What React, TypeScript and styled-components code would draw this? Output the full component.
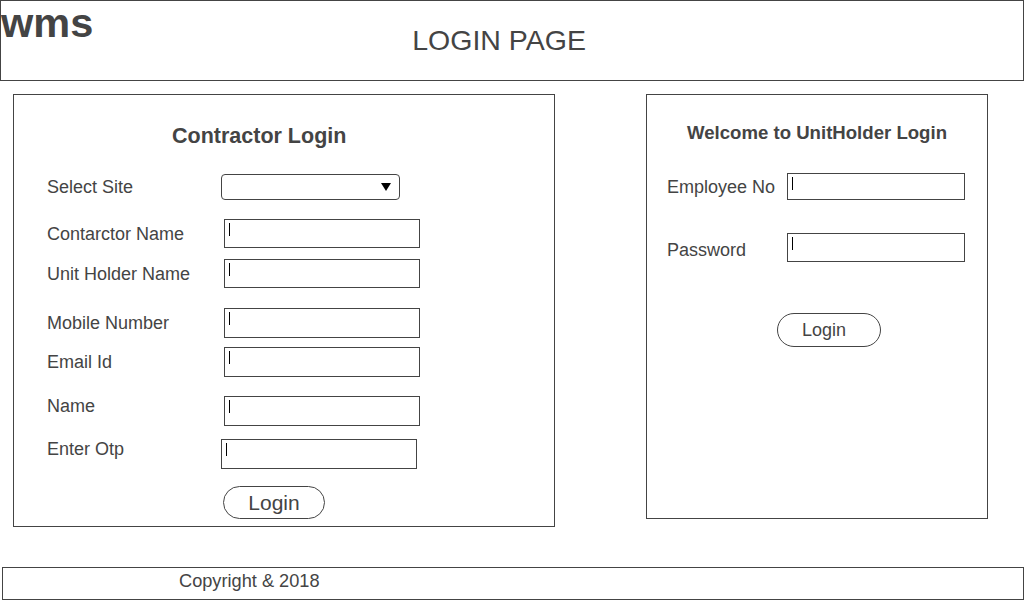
import React from "react";
import styled, { createGlobalStyle } from "styled-components";

const GlobalStyle = createGlobalStyle`
  *, *::before, *::after { box-sizing: border-box; }
  html, body { margin: 0; padding: 0; background: #ffffff; }
  body {
    width: 1024px;
    height: 600px;
    overflow: hidden;
    font-family: "Liberation Sans", Arial, Helvetica, sans-serif;
    color: #444444;
  }
`;

const Page = styled.div`
  width: 1024px;
  height: 600px;
  display: flex;
  flex-direction: column;
`;

const Header = styled.header`
  display: flex;
  align-items: flex-start;
  width: 1024px;
  height: 81px;
  flex-shrink: 0;
  border: 1px solid #444444;
  overflow: hidden;
`;

const Brand = styled.div`
  font-size: 41.5px;
  font-weight: 700;
  line-height: 42px;
  margin-top: 1px;
  color: #444444;
`;

const PageTitle = styled.h1`
  margin: 25px 0 0 319px;
  font-size: 28.5px;
  font-weight: 400;
  line-height: 28px;
  color: #444444;
`;

const Main = styled.main`
  display: flex;
  align-items: flex-start;
  gap: 91px;
  margin-top: 13px;
  padding-left: 13px;
`;

const Panel = styled.section<{ $w: number; $h: number; $pad: string }>`
  display: flex;
  flex-direction: column;
  align-items: flex-start;
  width: ${(p) => p.$w}px;
  height: ${(p) => p.$h}px;
  padding: ${(p) => p.$pad};
  border: 1px solid #444444;
`;

const PanelTitle = styled.h2<{
  $size: number;
  $lh: number;
  $mt: number;
  $ml?: number;
  $center?: boolean;
}>`
  margin: ${(p) => p.$mt}px 0 0 ${(p) => p.$ml ?? 0}px;
  font-size: ${(p) => p.$size}px;
  font-weight: 700;
  line-height: ${(p) => p.$lh}px;
  white-space: nowrap;
  color: #444444;
  align-self: ${(p) => (p.$center ? "stretch" : "flex-start")};
  text-align: ${(p) => (p.$center ? "center" : "left")};
`;

const FieldRow = styled.div<{ $mt: number }>`
  display: flex;
  align-items: center;
  margin-top: ${(p) => p.$mt}px;
`;

const FieldLabel = styled.label<{ $w: number; $shift?: number }>`
  width: ${(p) => p.$w}px;
  font-size: 18px;
  line-height: 18px;
  white-space: nowrap;
  color: #444444;
  margin-bottom: ${(p) => (p.$shift && p.$shift > 0 ? p.$shift * 2 : 0)}px;
  margin-top: ${(p) => (p.$shift && p.$shift < 0 ? -p.$shift * 2 : 0)}px;
`;

const TextBox = styled.div<{ $w: number; $h: number; $ml?: number }>`
  position: relative;
  width: ${(p) => p.$w}px;
  height: ${(p) => p.$h}px;
  margin-left: ${(p) => p.$ml ?? 0}px;
  border: 1px solid #444444;
  background: #ffffff;

  &::before {
    content: "";
    position: absolute;
    left: 4px;
    top: 3px;
    width: 1px;
    height: 13px;
    background: #000000;
  }
`;

const SelectBox = styled.div`
  display: flex;
  align-items: center;
  justify-content: flex-end;
  width: 179px;
  height: 26px;
  padding-right: 8px;
  border: 1px solid #444444;
  border-radius: 4px;
  background: #ffffff;
`;

const Caret = styled.span`
  width: 0;
  height: 0;
  border-left: 5px solid transparent;
  border-right: 5px solid transparent;
  border-top: 8px solid #000000;
`;

const PillButton = styled.button<{
  $w: number;
  $h: number;
  $size: number;
  $mt: number;
  $ml: number;
  $pr?: number;
}>`
  display: flex;
  align-items: center;
  justify-content: center;
  width: ${(p) => p.$w}px;
  height: ${(p) => p.$h}px;
  margin: ${(p) => p.$mt}px 0 0 ${(p) => p.$ml}px;
  padding: 0 ${(p) => p.$pr ?? 0}px 0 0;
  border: 1px solid #444444;
  border-radius: ${(p) => p.$h / 2}px;
  background: #ffffff;
  color: #444444;
  font-family: "Liberation Sans", Arial, Helvetica, sans-serif;
  font-size: ${(p) => p.$size}px;
  line-height: 1;
  cursor: pointer;
`;

const Footer = styled.footer`
  width: 1022px;
  height: 33px;
  margin: 40px 0 0 2px;
  padding: 4px 0 0 176px;
  border: 1px solid #444444;
  font-size: 18.2px;
  line-height: 18px;
  color: #444444;
`;

type Field = { label: string; mt: number; h: number; ml: number; shift?: number };

const contractorFields: Field[] = [
  { label: "Contarctor Name", mt: 19, h: 29, ml: 3 },
  { label: "Unit Holder Name", mt: 11, h: 29, ml: 3 },
  { label: "Mobile Number", mt: 20, h: 30, ml: 3 },
  { label: "Email Id", mt: 9, h: 30, ml: 3 },
  { label: "Name", mt: 19, h: 30, ml: 3, shift: 5 },
  { label: "Enter Otp", mt: 13, h: 30, ml: 0, shift: 5 },
];

export default function App() {
  return (
    <>
      <GlobalStyle />
      <Page>
        <Header>
          <Brand>wms</Brand>
          <PageTitle>LOGIN PAGE</PageTitle>
        </Header>

        <Main>
          <Panel $w={542} $h={433} $pad="0 0 0 33px">
            <PanelTitle $size={21.5} $lh={20} $mt={31} $ml={125}>
              Contractor Login
            </PanelTitle>
            <FieldRow $mt={28}>
              <FieldLabel $w={174}>Select Site</FieldLabel>
              <SelectBox>
                <Caret />
              </SelectBox>
            </FieldRow>
            {contractorFields.map((f) => (
              <FieldRow key={f.label} $mt={f.mt}>
                <FieldLabel $w={174} $shift={f.shift}>
                  {f.label}
                </FieldLabel>
                <TextBox $w={196} $h={f.h} $ml={f.ml} />
              </FieldRow>
            ))}
            <PillButton $w={102} $h={33} $size={21} $mt={17} $ml={176}>
              Login
            </PillButton>
          </Panel>

          <Panel $w={342} $h={425} $pad="0 20px">
            <PanelTitle $size={18.6} $lh={18} $mt={29} $center>
              Welcome to UnitHolder Login
            </PanelTitle>
            <FieldRow $mt={31}>
              <FieldLabel $w={120}>Employee No</FieldLabel>
              <TextBox $w={178} $h={27} />
            </FieldRow>
            <FieldRow $mt={33}>
              <FieldLabel $w={120} $shift={-2}>
                Password
              </FieldLabel>
              <TextBox $w={178} $h={29} />
            </FieldRow>
            <PillButton $w={104} $h={34} $size={18} $mt={51} $ml={110} $pr={10}>
              Login
            </PillButton>
          </Panel>
        </Main>

        <Footer>Copyright &amp; 2018</Footer>
      </Page>
    </>
  );
}
